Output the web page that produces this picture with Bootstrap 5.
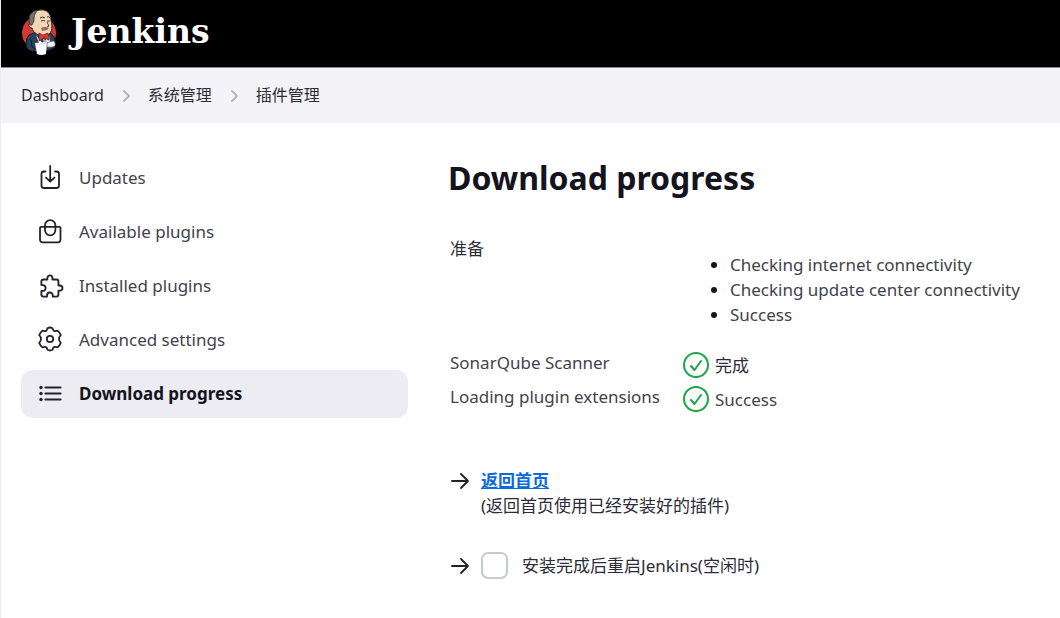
<!DOCTYPE html>
<html lang="zh-CN">
<head>
<meta charset="utf-8">
<meta name="viewport" content="width=device-width, initial-scale=1">
<title>Download progress - Jenkins</title>
<link href="https://cdn.jsdelivr.net/npm/bootstrap@5.3.0/dist/css/bootstrap.min.css" rel="stylesheet">
<style>
  :root { --ink: #14141f; --soft: #42424c; }
  body { font: 17px/25px "Noto Sans", "Noto Sans CJK SC", sans-serif; color: var(--soft); background: #fff; border-left: 1px solid #ececf0; min-height: 100vh; }
  svg { flex: none; overflow: visible; }
  .line-icon { fill: none; stroke: #22222e; stroke-width: 1.8; stroke-linecap: round; stroke-linejoin: round; }
  .topbar { background: #000; height: 68px; padding-bottom: 2px; border-bottom: 1px solid #888; }
  .wordmark { font: bold 33px/40px "DejaVu Serif", serif; color: #fff; padding-bottom: 2px; }
  .crumbs { background: #f4f4f8; height: 55px; font-size: 16px; }
  .crumbs a, .crumbs li { color: #2c2c38; }
  .shell { padding: 31px 20px; gap: 40px; }
  .side { width: 38%; max-width: 387px; gap: 6px; }
  .side .nav-link { height: 48px; padding: 0 16px 2px; gap: 16px; border-radius: 12px; color: var(--soft); }
  .side .nav-link.active { background: #ececf2; color: var(--ink); font-weight: 700; }
  h1 { font-size: 32px; line-height: 40px; font-weight: 700; color: var(--ink); margin: 4px 0 36px; }
  .jobs { border-collapse: separate; border-spacing: 1px 0; }
  .jobs th { font-weight: 400; width: 233px; vertical-align: top; padding-top: 2px; }
  .jobs td { height: 34px; padding: 0; }
  .jobs ul { margin: 18px 0 21px; padding-left: 47px; }
  .jobs li::marker { color: var(--ink); }
  .status { gap: 6px; }
  .cjk { color: #2c2c38; }
  .home-link { color: #0b6adf; font-weight: 700; }
  .next { gap: 10px; padding-left: 3px; }
  .restart { margin-top: 34px; }
  .restart .form-check-input { width: 27px; height: 27px; margin: 0; border: 2px solid #c3ccd1; border-radius: 7px; }
  @media (max-width: 767px) { .side { width: 100%; max-width: none; } }
</style>
</head>
<body>
<header class="topbar d-flex align-items-center px-3">
  <a href="#" class="d-flex align-items-center text-decoration-none ps-1">
    <svg width="38" height="50" viewBox="0 0 38 50" aria-hidden="true">
      <ellipse cx="18" cy="25" rx="17" ry="17" fill="#d33833"/>
      <path d="M8 27l7-3 14 1q5 3 5 9l-1 6q-5 3-9 3H11q-6-1-6-7 0-6 3-9z" fill="#24435a" stroke="#101820"/>
      <path d="M15 27l7 9 6-9 1 8-4 4-6-1z" fill="#f3f3f3"/>
      <path d="M9 15C8 7 13 2 19 2c7-1 11 4 11 10 2 8 1 15-6 16-6 0-12-3-13-8-3 0-4-3-2-5z" fill="#f0d6b7" stroke="#2b211c"/>
      <path d="M9 17C6 8 10 3 17 2 13 6 13 9 13 13l-2 4z" fill="#777069" stroke="#2b211c" stroke-width=".7"/>
      <path d="M19 10q3-2 5 0m2-1q2-1 3 1" fill="none" stroke="#3b2b24"/>
      <path d="M20 13q2-1 4 0m2 0h3M26 14l2 4-2 1" fill="none" stroke="#3b2b24" stroke-width=".9"/>
      <path d="M20 20q4-2 8 0l-2 2-5 1z" fill="#8b735f"/>
      <path d="M18 25l4 2 5-2 1 7-5-2-5 3z" fill="#d33833" stroke="#6f1717" stroke-width=".7"/>
      <path d="M22 31l3 1 2 3-4 2z" fill="#9fb6c6"/>
      <path d="M10 31l1 8 3 2" fill="none" stroke="#0f2231"/>
      <path d="M14 35l12-1-1 12q-5 2-9 0z" fill="#fff"/>
      <path d="M15 36q5 1 10-1" fill="none" stroke="#c9c9c9" stroke-width=".8"/>
      <path d="M26 35q3-2 7-2 2 2 1 5-3 2-8 1z" fill="#eee" stroke="#555" stroke-width=".6"/>
    </svg>
    <span class="wordmark ms-2 ps-1">Jenkins</span>
  </a>
</header>
<nav class="crumbs d-flex align-items-center" aria-label="Breadcrumb">
  <ol class="list-unstyled d-flex align-items-center m-0 ps-3 ms-1">
    <li><a href="#" class="text-decoration-none">Dashboard</a></li>
    <li class="d-flex px-3" aria-hidden="true"><svg width="12" height="14" viewBox="0 0 12 14" fill="none" stroke="#b5b5c5" stroke-width="2" stroke-linecap="round" stroke-linejoin="round"><path d="M4 2l5 5-5 5"/></svg></li>
    <li><a href="#" class="text-decoration-none">系统管理</a></li>
    <li class="d-flex px-3" aria-hidden="true"><svg width="12" height="14" viewBox="0 0 12 14" fill="none" stroke="#b5b5c5" stroke-width="2" stroke-linecap="round" stroke-linejoin="round"><path d="M4 2l5 5-5 5"/></svg></li>
    <li><a href="#" class="text-decoration-none">插件管理</a></li>
  </ol>
</nav>
<div class="shell d-flex flex-column flex-md-row">
  <nav class="side nav flex-column flex-nowrap flex-shrink-0" aria-label="Plugins">
    <a href="#" class="nav-link d-flex align-items-center">
      <svg class="line-icon" width="26" height="26" viewBox="0 0 26 26"><path d="M8.500 7.500H7a2.500 2.500 0 00-2.500 2.500v11.500A2.500 2.500 0 007 24h12.500a2.500 2.500 0 002.500-2.500V10a2.500 2.500 0 00-2.500-2.500H18M13.200 2v15.500M9 13.700l4.200 4 4.200-4"/></svg>Updates</a>
    <a href="#" class="nav-link d-flex align-items-center">
      <svg class="line-icon" width="26" height="26" viewBox="0 0 26 26"><path d="M4 8.800h18.500a1 1 0 011 1v12a2.500 2.500 0 01-2.500 2.500H5.500A2.500 2.500 0 013 21.800v-12a1 1 0 011-1zM8 8.800V7.300a5.200 5.200 0 0110.400 0v4.800a5.200 5.200 0 01-10.400 0z"/></svg>Available plugins</a>
    <a href="#" class="nav-link d-flex align-items-center">
      <svg class="line-icon" width="26" height="26" viewBox="-38 -20 512 512" style="stroke-width:36"><path d="M413.660 246.100H386a2 2 0 01-2-2v-77.240A38.860 38.860 0 00345.140 128H267.900a2 2 0 01-2-2V98.340c0-27.140-21.500-49.860-48.640-50.330a49.530 49.530 0 00-50.400 49.510V126a2 2 0 01-2 2H87.620A39.740 39.740 0 0048 167.620V238a2 2 0 002 2h26.910c29.370 0 53.680 25.480 54.090 54.850.42 29.870-23.510 57.150-53.290 57.150H50a2 2 0 00-2 2v70.380A39.740 39.740 0 0087.620 464H158a2 2 0 002-2v-20.930c0-30.280 24.750-56.350 55-57.060 30.100-.7 57 20.310 57 50.280V462a2 2 0 002 2h71.140A38.860 38.860 0 00384 425.140v-78a2 2 0 012-2h28.480c27.630 0 49.520-22.670 49.520-50.400s-23.200-48.640-50.340-48.640z"/></svg>Installed plugins</a>
    <a href="#" class="nav-link d-flex align-items-center">
      <svg class="line-icon" width="26" height="26" viewBox="0 0 26 26"><path d="M10.500 2.200Q13 .8 15.500 2.200C16 5 17.300 5.700 20.500 4.700Q23 6.500 23.800 9.200C21.400 11.500 21.400 14.500 23.800 16.800Q23 19.500 20.500 21.300C17.300 20.300 16 21 15.500 23.800Q13 25.200 10.500 23.800C10 21 8.700 20.300 5.500 21.300Q3 19.500 2.200 16.800C4.600 14.500 4.600 11.500 2.200 9.200Q3 6.500 5.500 4.700C8.700 5.700 10 5 10.500 2.200z"/><circle cx="13" cy="13" r="3.200"/></svg>Advanced settings</a>
    <a href="#" class="nav-link active d-flex align-items-center" aria-current="page">
      <svg class="line-icon" width="26" height="26" viewBox="0 0 26 26"><path d="M8.500 7.500h15M8.500 13.500h15M8.500 19.500h15" stroke-width="2.200"/><g fill="#22222e" stroke="none"><circle cx="4" cy="7.500" r="1.700"/><circle cx="4" cy="13.500" r="1.700"/><circle cx="4" cy="19.500" r="1.700"/></g></svg>Download progress</a>
  </nav>
  <main class="flex-grow-1">
    <h1>Download progress</h1>
    <table class="jobs">
      <tbody>
        <tr><th scope="row" class="cjk">准备</th><td><ul>
          <li>Checking internet connectivity</li>
          <li>Checking update center connectivity</li>
          <li>Success</li></ul></td></tr>
        <tr><th scope="row">SonarQube Scanner</th><td><div class="status d-flex align-items-center cjk"><svg width="26" height="26" viewBox="0 0 26 26" fill="none" stroke="#1ea64b" stroke-width="2" stroke-linecap="round" stroke-linejoin="round"><circle cx="13" cy="13" r="12"/><path d="M8 14l3.500 4L18 9"/></svg>完成</div></td></tr>
        <tr><th scope="row">Loading plugin extensions</th><td><div class="status d-flex align-items-center"><svg width="26" height="26" viewBox="0 0 26 26" fill="none" stroke="#1ea64b" stroke-width="2" stroke-linecap="round" stroke-linejoin="round"><circle cx="13" cy="13" r="12"/><path d="M8 14l3.500 4L18 9"/></svg>Success</div></td></tr>
      </tbody>
    </table>
    <div class="next d-flex align-items-start mt-5 pt-1">
      <svg width="20" height="26" viewBox="0 0 20 26" fill="none" stroke="#22222e" stroke-width="1.800" stroke-linecap="round" stroke-linejoin="round"><path d="M1 13h16M10 6l7 7-7 7"/></svg>
      <div class="cjk"><a href="#" class="home-link">返回首页</a><br>(返回首页使用已经安装好的插件)</div>
    </div>
    <div class="restart next d-flex align-items-center">
      <svg width="20" height="26" viewBox="0 0 20 26" fill="none" stroke="#22222e" stroke-width="1.800" stroke-linecap="round" stroke-linejoin="round"><path d="M1 13h16M10 6l7 7-7 7"/></svg>
      <input class="form-check-input" type="checkbox" id="restart">
      <label for="restart" class="cjk ps-1">安装完成后重启Jenkins(空闲时)</label>
    </div>
  </main>
</div>
<script src="https://cdn.jsdelivr.net/npm/bootstrap@5.3.0/dist/js/bootstrap.bundle.min.js"></script>
</body>
</html>
